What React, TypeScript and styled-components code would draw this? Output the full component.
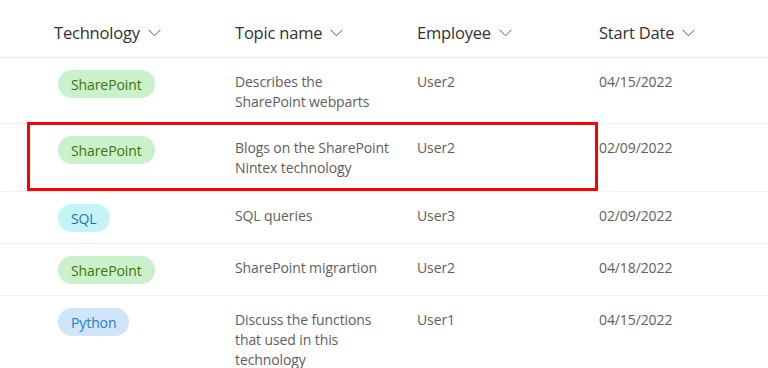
import React from 'react';
import styled, { createGlobalStyle } from 'styled-components';

const GlobalStyle = createGlobalStyle`
  html, body {
    margin: 0;
    padding: 0;
    background: #ffffff;
  }
  body {
    font-family: 'Open Sans', 'Noto Sans', sans-serif;
    -webkit-font-smoothing: antialiased;
  }
`;

const COLUMNS = '181px 182px 182px 1fr';

type Tech = 'SharePoint' | 'SQL' | 'Python';

const PILL_COLORS: Record<Tech, { bg: string; fg: string }> = {
  SharePoint: { bg: '#caf0cc', fg: '#437406' },
  SQL: { bg: '#c4f4f8', fg: '#1a73a8' },
  Python: { bg: '#d0e5f8', fg: '#1f82bb' },
};

const Table = styled.div`
  width: 768px;
  height: 368px;
  overflow: hidden;
  background: #ffffff;
`;

const HeaderRow = styled.div`
  display: grid;
  grid-template-columns: ${COLUMNS};
  height: 58px;
  padding-left: 54px;
  align-items: center;
  border-bottom: 1px solid #edebe9;
  box-sizing: border-box;
`;

const HeaderCell = styled.div`
  display: flex;
  align-items: center;
  gap: 8px;
  font-size: 16.5px;
  color: #323130;
  letter-spacing: -0.2px;
  padding-top: 7px;
`;

const Chevron = styled.svg`
  width: 13px;
  height: 8px;
  margin-top: 2px;
`;

const Row = styled.div<{ $h: number }>`
  position: relative;
  display: grid;
  grid-template-columns: ${COLUMNS};
  padding: 11px 0 11px 54px;
  border-bottom: 1px solid #f3f2f1;
  box-sizing: border-box;
  min-height: ${(p) => p.$h}px;
`;

const Cell = styled.div`
  font-size: 14px;
  line-height: 20px;
  color: #605e5c;
  padding-top: 3px;
  padding-right: 16px;
  letter-spacing: -0.1px;
`;

const PillCell = styled.div`
  padding: 1px 0 0 4px;
`;

const Pill = styled.span<{ $tech: Tech }>`
  display: inline-flex;
  align-items: center;
  height: 28px;
  padding: 0 13px;
  border-radius: 14px;
  font-size: 14px;
  background: ${(p) => PILL_COLORS[p.$tech].bg};
  color: ${(p) => PILL_COLORS[p.$tech].fg};
  letter-spacing: -0.1px;
`;

const Highlight = styled.div`
  position: absolute;
  left: 27px;
  top: -2px;
  width: 571px;
  height: 69px;
  border: 3px solid #ff0000;
  box-sizing: border-box;
  pointer-events: none;
`;

const headers = ['Technology', 'Topic name', 'Employee', 'Start Date'];

const rows: {
  tech: Tech;
  topic: string[];
  user: string;
  date: string;
  h: number;
  marked?: boolean;
}[] = [
  { tech: 'SharePoint', topic: ['Describes the', 'SharePoint webparts'], user: 'User2', date: '04/15/2022', h: 66 },
  { tech: 'SharePoint', topic: ['Blogs on the SharePoint', 'Nintex technology'], user: 'User2', date: '02/09/2022', h: 68, marked: true },
  { tech: 'SQL', topic: ['SQL queries'], user: 'User3', date: '02/09/2022', h: 52 },
  { tech: 'SharePoint', topic: ['SharePoint migrartion'], user: 'User2', date: '04/18/2022', h: 51 },
  { tech: 'Python', topic: ['Discuss the functions', 'that used in this', 'technology'], user: 'User1', date: '04/15/2022', h: 90 },
];

const ChevronDown = () => (
  <Chevron viewBox="0 0 13 8">
    <path d="M0.5 0.8 L6.5 6.8 L12.5 0.8" fill="none" stroke="#605e5c" strokeWidth="1" />
  </Chevron>
);

export default function App() {
  return (
    <>
      <GlobalStyle />
      <Table>
        <HeaderRow>
          {headers.map((h) => (
            <HeaderCell key={h}>
              {h}
              <ChevronDown />
            </HeaderCell>
          ))}
        </HeaderRow>
        {rows.map((r, i) => (
          <Row key={i} $h={r.h}>
            <PillCell>
              <Pill $tech={r.tech}>{r.tech}</Pill>
            </PillCell>
            <Cell>
              {r.topic.map((line, j) => (
                <React.Fragment key={j}>
                  {j > 0 && <br />}
                  {line}
                </React.Fragment>
              ))}
            </Cell>
            <Cell>{r.user}</Cell>
            <Cell>{r.date}</Cell>
            {r.marked && <Highlight />}
          </Row>
        ))}
      </Table>
    </>
  );
}
